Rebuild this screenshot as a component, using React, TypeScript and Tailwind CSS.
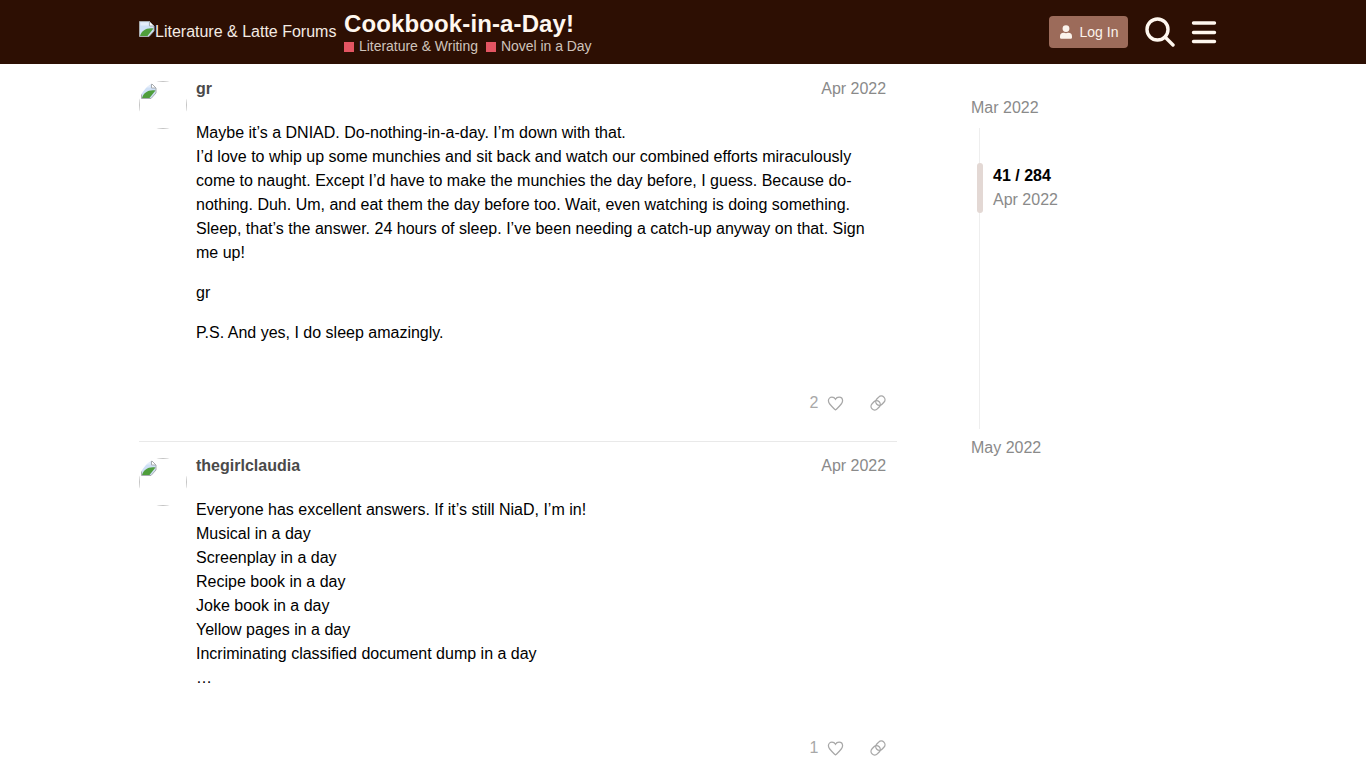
import React from "react";

function BrokenImg({ className = "" }: { className?: string }) {
  return (
    <svg viewBox="0 0 16 16" width="16" height="16" className={className}>
      <path d="M0.500 0.500h10l4.500 4.500v5l-5 5.500H0.500z" fill="#cfe0f6" stroke="#a8acb0" strokeWidth="1" />
      <path d="M10.500 0.500v4.500h4.500z" fill="#ffffff" stroke="#a8acb0" strokeWidth="1" />
      <path d="M1.500 1.500h8v3h-8z" fill="#e6eefa" />
      <path d="M1 15C2.500 10 7 6.500 14.500 7.500L8.500 15z" fill="#4f9e3c" />
    </svg>
  );
}

function Avatar() {
  return (
    <div className="relative w-[48px] h-[48px] shrink-0 rounded-full overflow-hidden">
      <div className="absolute inset-0 border border-[#c4c4c4]" />
      <BrokenImg className="absolute left-[2px] top-[2px]" />
    </div>
  );
}

function Heart() {
  return (
    <svg viewBox="0 0 24 24" width="17" height="17" fill="none" stroke="#a8a8a8" strokeWidth="1.800">
      <path d="M12 21C7 16.500 2 12.800 2 8.200 2 5 4.400 3 7 3c2 0 3.900 1 5 3 1.100-2 3-3 5-3 2.600 0 5 2 5 5.200 0 4.600-5 8.300-10 12.800z" />
    </svg>
  );
}

function LinkIcon() {
  return (
    <svg viewBox="0 0 24 24" width="16" height="16" fill="none" stroke="#a8a8a8" strokeWidth="2">
      <g transform="rotate(-45 12 12)">
        <rect x="-0.500" y="6.500" width="15" height="11" rx="5.500" />
        <rect x="9.500" y="6.500" width="15" height="11" rx="5.500" />
      </g>
    </svg>
  );
}

function Post({
  name,
  likes,
  first,
  children,
}: {
  name: string;
  likes: number;
  first?: boolean;
  children: React.ReactNode;
}) {
  return (
    <article className={`flex ${first ? "pt-[17px] border-b border-[#e9e9e9]" : "pt-[16px]"}`}>
      <div className="w-[57px] shrink-0">
        <Avatar />
      </div>
      <div className="w-[690px]">
        <div className="flex justify-between h-[22px] items-center -mt-[3px]">
          <span className="font-bold text-[#4a4a4a]">{name}</span>
          <span className="text-[#8a8a8a] tracking-[-0.03px]">Apr 2022</span>
        </div>
        <div className="mt-[21px] text-[16px] leading-[24px] text-black">{children}</div>
        <div className="flex items-center justify-end h-[28px] mt-[44px] mb-[24px] text-[#a8a8a8]">
          <span className="w-[10px] text-center mr-[8px]">{likes}</span>
          <Heart />
          <span className="w-[26px]" />
          <LinkIcon />
        </div>
      </div>
    </article>
  );
}

export default function App() {
  return (
    <div className="h-[768px] overflow-hidden bg-white text-[16px] font-['Liberation_Sans',Arial,sans-serif]">
      <header className="h-[64px] bg-[#2d0f03] flex items-center pl-[139px] pr-[149px]">
        <div className="flex items-center text-[#f4ebe3] w-[205px] h-[32px] mt-[-2px] shrink-0">
          <BrokenImg className="shrink-0 self-start mt-[6px]" />
          <span className="mt-[2px] whitespace-nowrap">Literature &amp; Latte Forums</span>
        </div>
        <div className="flex flex-col flex-1 mt-[-1px]">
          <h1 className="font-bold text-[24px] tracking-[0.12px] leading-[30px] pt-[1px] text-[#fff7ef]">Cookbook-in-a-Day!</h1>
          <div className="flex items-center -mt-[1px] text-[14px] leading-[17px] text-[#cfc3bb]">
            <span className="w-[10px] h-[10px] bg-[#e45562] mr-[5px]" />
            <span className="mr-[8px] tracking-[-0.03px]">Literature &amp; Writing</span>
            <span className="w-[10px] h-[10px] bg-[#e45562] mr-[5px]" />
            <span className="tracking-[-0.03px]">Novel in a Day</span>
          </div>
        </div>
        <button className="flex items-center justify-center w-[79px] h-[32px] rounded-[4px] bg-[#9c6b5a] text-[#fbf3ec] text-[14px]">
          <svg viewBox="0 0 448 512" width="12" height="14" fill="#fbf3ec" className="mr-[8px] ml-[1px]">
            <path d="M224 256a128 128 0 1 0 0-256 128 128 0 0 0 0 256zm90 32h-17a174 174 0 0 1-146 0h-17A134 134 0 0 0 0 422v42a48 48 0 0 0 48 48h352a48 48 0 0 0 48-48v-42a134 134 0 0 0-134-134z" />
          </svg>
          Log In
        </button>
        <svg viewBox="0 0 30 30" width="30" height="30" fill="none" stroke="#fff7ef" strokeWidth="3.400" className="ml-[17px]" strokeLinecap="round">
          <circle cx="12.500" cy="12.500" r="10.500" />
          <path d="M20 20l8 8" />
        </svg>
        <svg viewBox="0 0 26 26" width="26" height="26" fill="none" stroke="#fff7ef" strokeWidth="3.400" className="ml-[16px]" strokeLinecap="round">
          <path d="M2.500 4h21M2.500 13.500h21M2.500 22.500h21" />
        </svg>
      </header>
      <main className="flex pl-[139px]">
        <div className="w-[758px] shrink-0">
          <Post name="gr" likes={2} first>
            <p>
              Maybe it’s a DNIAD. Do-nothing-in-a-day. I’m down with that.
              <br />
              I’d love to whip up some munchies and sit back and watch our combined efforts miraculously
              <br />
              come to naught. Except I’d have to make the munchies the day before, I guess. Because do-
              <br />
              nothing. Duh. Um, and eat them the day before too. Wait, even watching is doing something.
              <br />
              Sleep, that’s the answer. 24 hours of sleep. I’ve been needing a catch-up anyway on that. Sign
              <br />
              me up!
            </p>
            <p className="mt-[16px]">gr</p>
            <p className="mt-[16px]">P.S. And yes, I do sleep amazingly.</p>
          </Post>
          <Post name="thegirlclaudia" likes={1}>
            <p>
              Everyone has excellent answers. If it’s still NiaD, I’m in!
              <br />
              Musical in a day
              <br />
              Screenplay in a day
              <br />
              Recipe book in a day
              <br />
              Joke book in a day
              <br />
              Yellow pages in a day
              <br />
              Incriminating classified document dump in a day
              <br />…
            </p>
          </Post>
        </div>
        <aside className="ml-[74px] mt-[32px] w-[150px] text-[#8a8a8a]">
          <div className="leading-[24px]">Mar 2022</div>
          <div className="relative ml-[8px] h-[301px] mt-[8px] border-l border-[#eeeeee]">
            <div className="absolute left-[-3px] top-[35px] w-[6px] h-[50px] rounded-[3px] bg-[#e3d8d4]" />
            <div className="absolute left-[13px] top-[36px] whitespace-nowrap leading-[24px]">
              <div className="font-bold text-black">41 / 284</div>
              <div>Apr 2022</div>
            </div>
          </div>
          <div className="leading-[24px] mt-[7px]">May 2022</div>
        </aside>
      </main>
    </div>
  );
}
